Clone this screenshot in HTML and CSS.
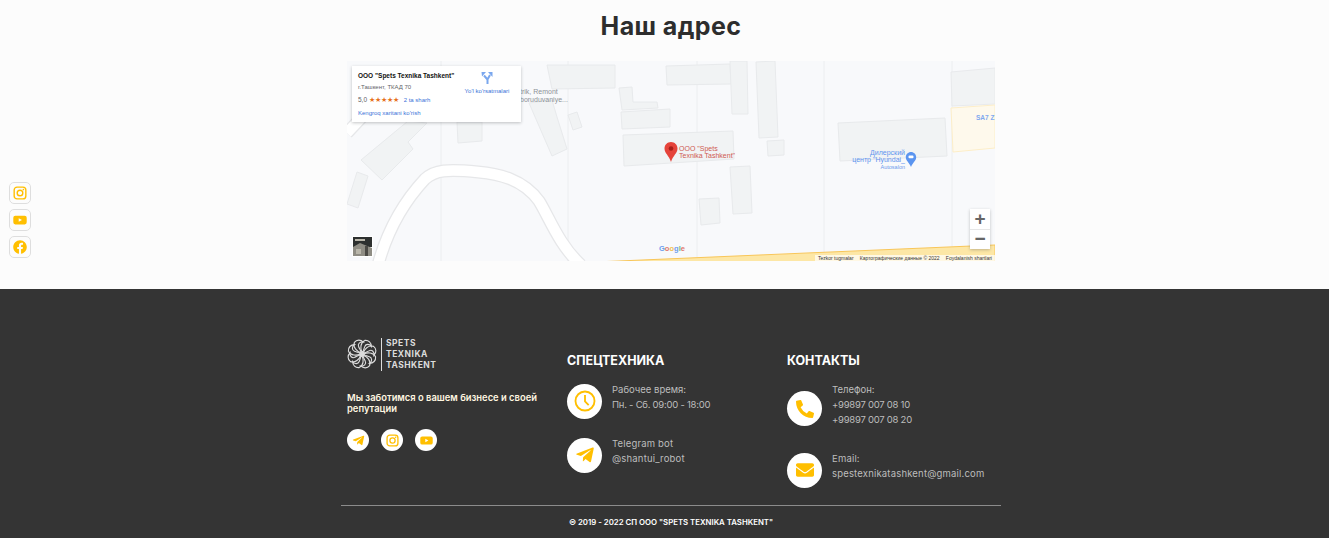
FILE: index.html
```html
<!DOCTYPE html>
<html>
<head>
  <meta charset="utf-8">
  <title>Наш адрес</title>
  <link rel="stylesheet" href="styles.css">
</head>
<body>
  <!-- Shared icons -->
  <svg class="icon-defs" width="0" height="0">
    <symbol id="i-telegram" viewBox="0 0 448 512"><path d="M446.7 98.6l-67.6 318.8c-5.1 22.5-18.4 28.1-37.3 17.5l-103-75.9-49.7 47.8c-5.5 5.5-10.1 10.1-20.7 10.1l7.4-104.9 190.9-172.5c8.3-7.4-1.8-11.5-12.9-4.1L117.8 284 16.2 252.2c-22.1-6.9-22.5-22.1 4.6-32.7L418.2 66.4c18.4-6.9 34.5 4.1 28.5 32.2z"/></symbol>
    <symbol id="i-instagram" viewBox="0 0 24 24"><rect x="2" y="2" width="20" height="20" rx="5" fill="none" stroke="currentColor" stroke-width="2.4"/><circle cx="12" cy="12" r="4.8" fill="none" stroke="currentColor" stroke-width="2.4"/><circle cx="17.8" cy="6.2" r="1.4"/></symbol>
    <symbol id="i-youtube" viewBox="0 0 24 24"><path fill-rule="evenodd" d="M4 4.5h16a3.5 3.5 0 0 1 3.5 3.5v8a3.5 3.5 0 0 1-3.5 3.5H4A3.5 3.5 0 0 1 .5 16V8A3.5 3.5 0 0 1 4 4.5zM9.8 8.8v6.4l5.6-3.2z"/></symbol>
    <symbol id="i-facebook" viewBox="0 0 512 512"><path d="M504 256C504 119 393 8 256 8S8 119 8 256c0 123.78 90.69 226.38 209.25 245V327.69h-63V256h63v-54.64c0-62.15 37-96.48 93.67-96.48 27.14 0 55.52 4.84 55.52 4.84v61h-31.28c-30.8 0-40.41 19.12-40.41 38.73V256h68.78l-11 71.69h-57.78V501C413.31 482.38 504 379.78 504 256z"/></symbol>
  </svg>

  <div class="side-social">
    <a class="side-social-item"><svg><use href="#i-instagram"/></svg></a>
    <a class="side-social-item"><svg><use href="#i-youtube"/></svg></a>
    <a class="side-social-item"><svg><use href="#i-facebook"/></svg></a>
  </div>

  <section class="address">
    <h1 class="address-title">Наш адрес</h1>

    <div class="map">
      <svg class="map-canvas" viewBox="0 0 648 200" width="648" height="200">
        <g class="map-grid">
          <line x1="94" y1="0" x2="94" y2="200"/>
          <line x1="221" y1="0" x2="221" y2="200"/>
          <line x1="350" y1="0" x2="350" y2="200"/>
          <line x1="477" y1="0" x2="477" y2="200"/>
          <line x1="605" y1="0" x2="605" y2="200"/>
        </g>
        <g class="map-roads">
          <path class="road-edge" d="M0 72L32 38M31 204C38 178 50 148 78 118C88 109 100 108 131 111C152 113 176 118 192 140C202 156 212 184 234 204"/>
          <path class="road-fill" d="M0 72L32 38M31 204C38 178 50 148 78 118C88 109 100 108 131 111C152 113 176 118 192 140C202 156 212 184 234 204"/>
        </g>
        <g class="map-buildings">
          <polygon points="200,4 268,4 268,27 205,28"/>
          <polygon points="110,61 135,61 135,80 111,82"/>
          <polygon points="14,99 61,60 80,62 61,81 66,88 35,119"/>
          <polygon points="10,111 21,115 11,147 0,143"/>
          <polygon points="182,42 205,39 210,56 220,88 205,95"/>
          <polygon points="221,54 230,51 235,66 226,69"/>
          <polygon points="272,27 285,26 286,41 310,41 311,47 275,49"/>
          <polygon points="274,51 323,48 323,66 275,68"/>
          <polygon points="276,74 386,70 387,98 277,105"/>
          <polygon points="319,5 383,3 384,23 320,24"/>
          <polygon points="383,0 400,0 401,53 385,53"/>
          <polygon points="409,1 428,0 431,76 412,77"/>
          <polygon points="420,80 437,79 437,94 421,95"/>
          <polygon points="383,106 403,105 405,152 386,153"/>
          <polygon points="352,138 372,137 373,162 354,164"/>
          <polygon points="491,62 598,57 600,95 493,100"/>
          <polygon points="604,11 648,7 648,43 605,45"/>
          <polygon class="building-tint" points="604,47 648,44 648,87 606,91"/>
        </g>
        <polygon class="map-highway" points="248,201 648,184 648,201"/>

        <text class="label-grey" x="173" y="33">trik, Remont</text>
        <text class="label-grey" x="173" y="41">boruduvaniye...</text>
        <text class="label-blue-bold" x="629" y="59">SA7 Z</text>

        <!-- Place marker -->
        <path class="pin-red" d="M324 81c-3.700 0-6.500 2.900-6.500 6.500 0 4.800 4.600 7 6.500 13.500 1.900-6.500 6.500-8.700 6.500-13.500 0-3.600-2.800-6.500-6.500-6.500z"/>
        <circle class="pin-red-dot" cx="324" cy="87.500" r="2.300"/>
        <text class="label-red" x="332" y="90">ООО "Spets</text>
        <text class="label-red" x="332" y="97">Texnika Tashkent"</text>

        <!-- Dealer marker -->
        <path class="pin-blue" d="M564 91c-2.900 0-5.200 2.300-5.200 5.200 0 3.700 3.600 5.300 5.200 9.800 1.600-4.500 5.200-6.100 5.200-9.800 0-2.900-2.300-5.200-5.200-5.200z"/>
        <rect class="pin-blue-glyph" x="561.500" y="94.500" width="5" height="2.800" rx="1"/>
        <text class="label-blue" x="558" y="94" text-anchor="end">Дилерский</text>
        <text class="label-blue" x="558" y="101" text-anchor="end">центр "Hyundai_</text>
        <text class="label-blue-small" x="558" y="108" text-anchor="end">Autosalon</text>

        <!-- Street view thumbnail -->
        <rect class="thumb-frame" x="5" y="175" width="21" height="21"/>
        <rect class="thumb-dark" x="6" y="176" width="19" height="10"/>
        <polygon class="thumb-ground" points="6,186 13,182 25,187 25,195 6,195"/>
        <rect class="thumb-post" x="18" y="185" width="3" height="10"/>
        <rect class="thumb-light" x="9" y="188" width="5" height="5"/>
        <rect class="thumb-light" x="8" y="178" width="10" height="2"/>
      </svg>

      <div class="map-card">
        <div class="map-card-main">
          <div class="map-card-name">ООО "Spets Texnika Tashkent"</div>
          <div class="map-card-address">г.Ташкент, ТКАД 70</div>
          <div class="map-card-rating">5,0 <span class="map-card-stars">★★★★★</span> <a class="map-link map-card-reviews">2 ta sharh</a></div>
          <a class="map-link map-card-more">Kengroq xaritani ko'rish</a>
        </div>
        <div class="map-card-route">
          <svg width="12" height="13" viewBox="0 0 12 13"><path class="route-line" d="M6.500 13V8.500L3 4.500M6.500 8.500L9 4"/><path class="route-head" d="M.5 1h4.500L1 5.500zM7 1h4.500v5z"/></svg>
          <a class="map-link">Yo'l ko'rsatmalari</a>
        </div>
      </div>

      <div class="map-google"><span class="g-blue">G</span><span class="g-red">o</span><span class="g-yellow">o</span><span class="g-blue">g</span><span class="g-green">l</span><span class="g-red">e</span></div>

      <div class="map-zoom">
        <div class="map-zoom-btn">+</div>
        <div class="map-zoom-btn">−</div>
      </div>

      <div class="map-attribution">
        <span>Tezkor tugmalar</span>
        <span>Картографические данные © 2022</span>
        <span>Foydalanish shartlari</span>
      </div>
    </div>
  </section>

  <footer class="footer">
    <div class="footer-inner">
      <div class="footer-cols">
        <div class="footer-col">
          <div class="logo">
            <svg class="logo-mark" viewBox="-16 -16 32 32" width="30" height="30">
              <g>
                <path d="M0 -1.500C-2 -6 -2 -12 3 -14.500C7 -15 10 -12 10 -8C8 -11 4 -11 3 -8C2 -6 2 -3 0 -1.500z"/>
                <path transform="rotate(45)" d="M0 -1.500C-2 -6 -2 -12 3 -14.500C7 -15 10 -12 10 -8C8 -11 4 -11 3 -8C2 -6 2 -3 0 -1.500z"/>
                <path transform="rotate(90)" d="M0 -1.500C-2 -6 -2 -12 3 -14.500C7 -15 10 -12 10 -8C8 -11 4 -11 3 -8C2 -6 2 -3 0 -1.500z"/>
                <path transform="rotate(135)" d="M0 -1.500C-2 -6 -2 -12 3 -14.500C7 -15 10 -12 10 -8C8 -11 4 -11 3 -8C2 -6 2 -3 0 -1.500z"/>
                <path transform="rotate(180)" d="M0 -1.500C-2 -6 -2 -12 3 -14.500C7 -15 10 -12 10 -8C8 -11 4 -11 3 -8C2 -6 2 -3 0 -1.500z"/>
                <path transform="rotate(225)" d="M0 -1.500C-2 -6 -2 -12 3 -14.500C7 -15 10 -12 10 -8C8 -11 4 -11 3 -8C2 -6 2 -3 0 -1.500z"/>
                <path transform="rotate(270)" d="M0 -1.500C-2 -6 -2 -12 3 -14.500C7 -15 10 -12 10 -8C8 -11 4 -11 3 -8C2 -6 2 -3 0 -1.500z"/>
                <path transform="rotate(315)" d="M0 -1.500C-2 -6 -2 -12 3 -14.500C7 -15 10 -12 10 -8C8 -11 4 -11 3 -8C2 -6 2 -3 0 -1.500z"/>
              </g>
              <rect class="logo-core" x="-2" y="-2" width="4" height="4"/>
            </svg>
            <div class="logo-text">SPETS<br>TEXNIKA<br>TASHKENT</div>
          </div>
          <p class="footer-about">Мы заботимся о вашем бизнесе и своей репутации</p>
          <div class="footer-social">
            <a class="round-icon round-icon-small"><svg class="ic-13"><use href="#i-telegram"/></svg></a>
            <a class="round-icon round-icon-small"><svg class="ic-13"><use href="#i-instagram"/></svg></a>
            <a class="round-icon round-icon-small"><svg class="ic-13"><use href="#i-youtube"/></svg></a>
          </div>
        </div>

        <div class="footer-col">
          <h3 class="footer-title">СПЕЦТЕХНИКА</h3>
          <div class="contact">
            <div class="round-icon">
              <svg class="ic-clock" viewBox="0 0 24 24"><circle cx="12" cy="12" r="10.400"/><path d="M12 5.500V12.500L16 16.500"/></svg>
            </div>
            <div class="contact-text">
              <div>Рабочее время:</div>
              <div class="text-digits">Пн. - Сб. 09:00 - 18:00</div>
            </div>
          </div>
          <div class="contact">
            <div class="round-icon"><svg class="ic-20"><use href="#i-telegram"/></svg></div>
            <div class="contact-text text-latin">
              <div>Telegram bot</div>
              <div>@shantui_robot</div>
            </div>
          </div>
        </div>

        <div class="footer-col">
          <h3 class="footer-title">КОНТАКТЫ</h3>
          <div class="contact">
            <div class="round-icon">
              <svg class="ic-18" viewBox="0 0 512 512"><path d="M497.39 361.8l-112-48a24 24 0 0 0-28 6.900l-49.600 60.600A370.660 370.660 0 0 1 130.600 204.110l60.600-49.600a23.940 23.940 0 0 0 6.900-28l-48-112A24.160 24.160 0 0 0 122.600 .610l-104 24A24 24 0 0 0 0 48c0 256.500 207.900 464 464 464a24 24 0 0 0 23.400-18.600l24-104a24.290 24.290 0 0 0-14.010-27.600z"/></svg>
            </div>
            <div class="contact-text">
              <div>Телефон:</div>
              <div class="text-digits">+99897 007 08 10</div>
              <div class="text-digits">+99897 007 08 20</div>
            </div>
          </div>
          <div class="contact">
            <div class="round-icon">
              <svg class="ic-18" viewBox="0 0 512 512"><path d="M502.300 190.800c3.900-3.100 9.700-.2 9.700 4.700V400c0 26.500-21.500 48-48 48H48c-26.500 0-48-21.500-48-48V195.600c0-5 5.700-7.800 9.700-4.700 22.400 17.400 52.100 39.500 154.100 113.600 21.100 15.400 56.700 47.800 92.200 47.600 35.700 .3 72-32.800 92.300-47.600 102-74.100 131.600-96.300 154-113.700zM256 320c23.200 .4 56.600-29.200 73.400-41.400 132.700-96.300 142.800-104.700 173.400-128.700 5.800-4.500 9.200-11.500 9.200-18.900v-19c0-26.500-21.500-48-48-48H48C21.500 64 0 85.500 0 112v19c0 7.400 3.400 14.300 9.200 18.900 30.600 23.900 40.700 32.400 173.400 128.700 16.800 12.200 50.200 41.800 73.400 41.400z"/></svg>
            </div>
            <div class="contact-text text-latin">
              <div>Email:</div>
              <div>spestexnikatashkent@gmail.com</div>
            </div>
          </div>
        </div>
      </div>

      <div class="footer-copy">© 2019 - 2022 СП ООО "SPETS TEXNIKA TASHKENT"</div>
    </div>
  </footer>
</body>
</html>
```

FILE: styles.css
```css
body {
  margin: 0;
  background-color: #fcfcfc;
  font-family: Inter, "Open Sans", sans-serif;
  overflow: hidden;
}

a {
  color: inherit;
  text-decoration: none;
}

.icon-defs {
  position: absolute;
}

/* Fixed social strip */
.side-social {
  position: fixed;
  left: 9px;
  top: 182px;
  display: flex;
  flex-direction: column;
  gap: 5px;
}

.side-social-item {
  width: 20px;
  height: 20px;
  border: 1px solid #dedede;
  border-radius: 5px;
  display: flex;
  align-items: center;
  justify-content: center;
  color: #ffbf00;
  fill: #ffbf00;
}

.side-social-item svg {
  width: 14px;
  height: 14px;
}

/* Address and map */
.address {
  width: 648px;
  margin-left: 347px;
  height: 289px;
}

.address-title {
  margin: 0;
  padding-top: 10px;
  height: 61px;
  box-sizing: border-box;
  text-align: center;
  font-size: 25px;
  line-height: 32px;
  font-weight: 700;
  letter-spacing: .4px;
  color: #2d2d2d;
}

.map {
  position: relative;
  width: 648px;
  height: 200px;
  background-color: #f8f9fb;
  overflow: hidden;
  font-family: "Liberation Sans", Arial, sans-serif;
}

.map-canvas {
  display: block;
}

.map-grid line {
  stroke: #eceef0;
  stroke-width: 1;
}

.map-roads path {
  fill: none;
}

.road-edge {
  stroke: #e6e7e9;
  stroke-width: 13;
}

.road-fill {
  stroke: #fff;
  stroke-width: 10.500;
}

.map-buildings polygon {
  fill: #f1f3f4;
  stroke: #e8eaec;
  stroke-width: 1;
}

.map-buildings .building-tint {
  fill: #fef9ec;
  stroke: #fdeec8;
}

.map-highway {
  fill: #fde7a6;
  stroke: #f8c659;
  stroke-width: 1;
}

.map-canvas text {
  font-family: "Liberation Sans", Arial, sans-serif;
}

.label-grey {
  font-size: 7px;
  fill: #8d9297;
}

.label-red {
  font-size: 7px;
  fill: #cf5a52;
}

.label-blue {
  font-size: 7px;
  fill: #5f93ee;
}

.label-blue-small {
  font-size: 5.500px;
  fill: #6e9bec;
}

.label-blue-bold {
  font-size: 6.500px;
  font-weight: 700;
  fill: #7ea8ef;
}

.pin-red {
  fill: #e5433a;
}

.pin-red-dot {
  fill: #a81e18;
}

.pin-blue {
  fill: #5b95f0;
}

.pin-blue-glyph {
  fill: #fff;
}

.thumb-frame {
  fill: #fff;
}

.thumb-dark {
  fill: #2d302f;
}

.thumb-ground {
  fill: #8f8d84;
}

.thumb-post {
  fill: #4b4a45;
}

.thumb-light {
  fill: #b9b6aa;
}

.map-card {
  position: absolute;
  left: 5px;
  top: 5px;
  width: 169px;
  height: 56px;
  box-sizing: border-box;
  padding: 5px 6px;
  background-color: #fff;
  box-shadow: 0 1px 3px rgba(60, 64, 67, .3);
  display: flex;
  justify-content: space-between;
}

.map-card-name {
  font-size: 6.500px;
  line-height: 9px;
  font-weight: 700;
  color: #111;
}

.map-card-address {
  margin-top: 3px;
  font-size: 6px;
  line-height: 8px;
  color: #5f6368;
}

.map-card-rating {
  margin-top: 4px;
  font-size: 6.500px;
  line-height: 9px;
  color: #5f6368;
}

.map-card-stars {
  color: #e7711b;
  font-size: 6.500px;
}

.map-link {
  color: #3a73d8;
  font-size: 6px;
}

.map-card-reviews {
  margin-left: 3px;
}

.map-card-more {
  display: block;
  margin-top: 4px;
  line-height: 8px;
}

.map-card-route {
  width: 48px;
  margin-right: 4px;
  text-align: center;
  display: flex;
  flex-direction: column;
  align-items: center;
  gap: 4px;
  white-space: nowrap;
}

.route-line {
  fill: none;
  stroke: #7aa7ee;
  stroke-width: 2;
}

.route-head {
  fill: #7aa7ee;
}

.map-google {
  position: absolute;
  left: 312px;
  bottom: 7px;
  font-size: 7.500px;
  font-weight: 700;
  line-height: 10px;
}

.g-blue { color: #6d9eed; }
.g-red { color: #e0776e; }
.g-yellow { color: #f0c14f; }
.g-green { color: #71bb80; }

.map-zoom {
  position: absolute;
  right: 5px;
  bottom: 12px;
  width: 20px;
  background-color: #fff;
  box-shadow: 0 1px 3px rgba(60, 64, 67, .3);
}

.map-zoom-btn {
  height: 20px;
  font-family: "Liberation Sans", Arial, sans-serif;
  font-size: 19px;
  font-weight: 700;
  line-height: 19px;
  text-align: center;
  color: #666;
}

.map-zoom-btn + .map-zoom-btn {
  box-shadow: inset 0 1px 0 #e6e6e6;
}

.map-attribution {
  position: absolute;
  right: 0;
  bottom: 0;
  height: 6px;
  width: 180px;
  padding: 0 3px;
  box-sizing: border-box;
  display: flex;
  justify-content: space-between;
  background-color: rgba(255, 255, 255, .7);
  font-size: 5px;
  line-height: 6px;
  color: #333;
  white-space: nowrap;
}

/* Footer */
.footer {
  height: 249px;
  background-color: #343434;
}

.footer-inner {
  width: 660px;
  margin-left: 341px;
}

.footer-cols {
  display: grid;
  grid-template-columns: repeat(3, 220px);
  height: 217px;
  box-sizing: border-box;
  padding-top: 49px;
  border-bottom: 1px solid #8c8c8c;
}

.footer-col {
  padding-left: 6px;
}

.logo {
  display: flex;
  align-items: center;
  height: 32px;
  color: #dcdcdc;
}

.logo-mark {
  fill: none;
  stroke: #dcdcdc;
  stroke-width: 1.200;
}

.logo-core {
  fill: #dcdcdc;
}

.logo-text {
  margin-left: 4px;
  padding-left: 4px;
  border-left: 1px solid #dcdcdc;
  font-size: 8.500px;
  line-height: 11px;
  font-weight: 700;
  letter-spacing: .5px;
}

.footer-about {
  margin: 22px 0 0;
  width: 200px;
  font-size: 9.400px;
  line-height: 11px;
  font-weight: 600;
  color: #fff6e0;
}

.footer-social {
  display: flex;
  gap: 12px;
  margin-top: 15px;
}

.round-icon {
  flex: none;
  width: 35px;
  height: 35px;
  border-radius: 50%;
  background-color: #fff;
  color: #ffbf00;
  fill: #ffbf00;
  display: flex;
  align-items: center;
  justify-content: center;
}

.round-icon-small {
  width: 22px;
  height: 22px;
}

.ic-13 {
  width: 13px;
  height: 13px;
}

.ic-18 {
  width: 18px;
  height: 18px;
}

.ic-20 {
  width: 20px;
  height: 20px;
}

.ic-clock {
  width: 22px;
  height: 22px;
  fill: none;
  stroke: #ffbf00;
  stroke-width: 2;
}

.footer-title {
  margin: 15px 0 13px;
  font-size: 12.500px;
  line-height: 16px;
  font-weight: 700;
  color: #fff;
}

.contact {
  display: flex;
  align-items: center;
  gap: 10px;
  margin-bottom: 16px;
}

.contact-text {
  margin-bottom: 8px;
  font-size: 9.500px;
  line-height: 15px;
  color: #bdbdbd;
  white-space: nowrap;
}

.text-latin {
  letter-spacing: .18px;
}

.text-digits {
  letter-spacing: -.25px;
}

.footer-copy {
  padding-top: 9px;
  text-align: center;
  font-size: 7.800px;
  line-height: 14px;
  font-weight: 600;
  color: #fff;
}
```
